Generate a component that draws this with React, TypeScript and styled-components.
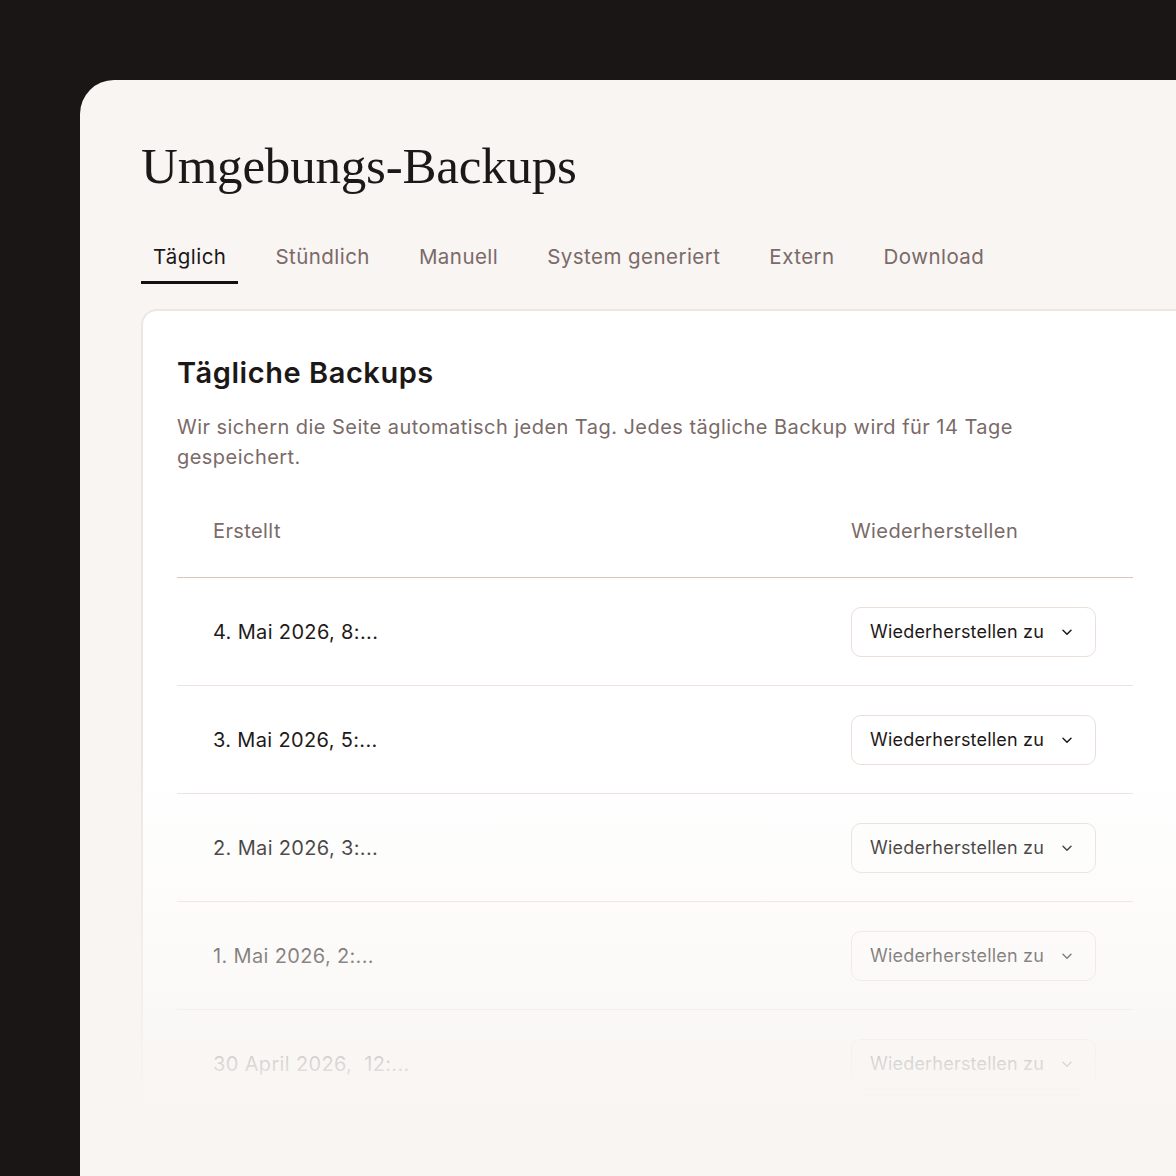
import { FC } from 'react';
import styled, { createGlobalStyle } from 'styled-components';

const GlobalStyle = createGlobalStyle`
  html, body {
    margin: 0;
    padding: 0;
    background: #1a1616;
  }
  body {
    font-family: Inter, "Noto Sans", sans-serif;
    -webkit-font-smoothing: antialiased;
  }
`;

const Page = styled.div`
  width: 1176px;
  height: 1176px;
  padding: 80px 0 0 80px;
  box-sizing: border-box;
  overflow: hidden;
`;

const Panel = styled.main`
  height: 100%;
  background: #f8f5f2;
  border-top-left-radius: 34px;
  padding: 58px 0 0 61px;
  box-sizing: border-box;
  overflow: hidden;
`;

const Title = styled.h1`
  margin: 0;
  font-family: "Liberation Serif", "DejaVu Serif", serif;
  font-weight: 400;
  font-size: 51px;
  line-height: 56px;
  letter-spacing: -0.2px;
  color: #1d1818;
`;

const Tabs = styled.nav`
  display: flex;
  gap: 25px;
  margin-top: 45px;
`;

const Tab = styled.button<{ $active?: boolean }>`
  border: none;
  background: none;
  padding: 6px 12px 12px;
  font-family: inherit;
  font-size: 20.5px;
  line-height: 24px;
  letter-spacing: 0.45px;
  color: ${({ $active }) => ($active ? '#1d1818' : '#7a6a68')};
  border-bottom: 3px solid ${({ $active }) => ($active ? '#141010' : 'transparent')};
  cursor: pointer;
`;

const Card = styled.section`
  position: relative;
  margin-top: 25px;
  background: #ffffff;
  border: 2px solid #efe6e0;
  border-right: none;
  border-top-left-radius: 16px;
  padding: 44px 44px 0 34px;
  height: 900px;
  box-sizing: border-box;
`;

const Fade = styled.div`
  position: absolute;
  left: -4px;
  right: 0;
  top: 450px;
  bottom: 0;
  background: linear-gradient(
    to bottom,
    rgba(248, 245, 242, 0) 0px,
    rgba(248, 245, 242, 0.45) 190px,
    rgba(248, 245, 242, 0.92) 320px,
    #f8f5f2 345px
  );
  pointer-events: none;
`;

const CardTitle = styled.h2`
  margin: 0;
  font-size: 29px;
  line-height: 36px;
  font-weight: 600;
  letter-spacing: 0.55px;
  color: #1d1818;
`;

const Description = styled.p`
  margin: 21px 0 0;
  max-width: 880px;
  font-size: 20px;
  line-height: 30px;
  letter-spacing: 0.46px;
  color: #7a6a68;
`;

const Table = styled.div`
  margin-top: 42px;
  width: 956px;
`;

const HeaderRow = styled.div`
  display: grid;
  grid-template-columns: 638px 1fr;
  padding: 4px 0 0 36px;
  height: 64px;
  box-sizing: border-box;
  align-items: start;
  border-bottom: 1.5px solid #d8c7be;
  font-size: 20px;
  line-height: 26px;
  letter-spacing: 0.4px;
  color: #7a6a68;
`;

const Row = styled.div`
  display: grid;
  grid-template-columns: 638px 1fr;
  align-items: center;
  height: 108px;
  padding-left: 36px;
  border-bottom: 1px solid #ede2dc;
  box-sizing: border-box;
`;

const DateCell = styled.span`
  font-size: 20px;
  letter-spacing: 0.35px;
  white-space: pre;
  color: #1f1a1a;
`;

const RestoreButton = styled.button`
  display: inline-flex;
  align-items: center;
  justify-content: space-between;
  gap: 14px;
  width: 245px;
  height: 50px;
  padding: 0 22px 0 18px;
  background: #ffffff;
  border: 1.5px solid #eadfd9;
  border-radius: 10px;
  font-family: inherit;
  font-size: 18px;
  letter-spacing: 0.2px;
  color: #1d1818;
  cursor: pointer;
  box-sizing: border-box;
`;

const Chevron: FC = () => (
  <svg width="12" height="12" viewBox="0 0 12 12" fill="none">
    <path d="M2 4.2 6 8.2l4-4" stroke="#1d1818" strokeWidth="1.5" strokeLinecap="round" strokeLinejoin="round" />
  </svg>
);

const tabs = ['Täglich', 'Stündlich', 'Manuell', 'System generiert', 'Extern', 'Download'];

const backups = [
  '4. Mai 2026, 8:...',
  '3. Mai 2026, 5:...',
  '2. Mai 2026, 3:...',
  '1. Mai 2026, 2:...',
  '30 April 2026,  12:...',
];

const App: FC = () => (
  <>
    <GlobalStyle />
    <Page>
      <Panel>
        <Title>Umgebungs-Backups</Title>
        <Tabs>
          {tabs.map((tab, i) => (
            <Tab key={tab} $active={i === 0}>
              {tab}
            </Tab>
          ))}
        </Tabs>
        <Card>
          <CardTitle>Tägliche Backups</CardTitle>
          <Description>
            Wir sichern die Seite automatisch jeden Tag. Jedes tägliche Backup wird für 14 Tage
            gespeichert.
          </Description>
          <Table>
            <HeaderRow>
              <span>Erstellt</span>
              <span>Wiederherstellen</span>
            </HeaderRow>
            {backups.map((date) => (
              <Row key={date}>
                <DateCell>{date}</DateCell>
                <div>
                  <RestoreButton>
                    Wiederherstellen zu
                    <Chevron />
                  </RestoreButton>
                </div>
              </Row>
            ))}
          </Table>
          <Fade />
        </Card>
      </Panel>
    </Page>
  </>
);

export default App;
